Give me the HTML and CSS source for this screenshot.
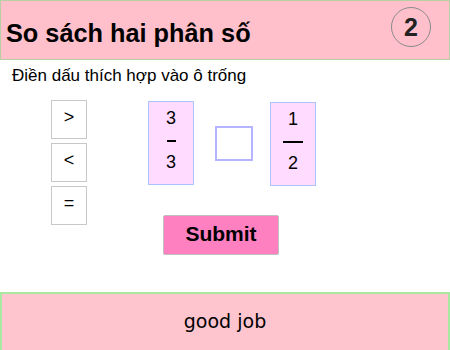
FILE: index.html
```html
<!DOCTYPE html>
<html lang="vi">
<head>
<meta charset="utf-8">
<title>So sách hai phân số</title>
<link rel="stylesheet" href="styles.css">
</head>
<body>
<div class="page">
  <header class="header">
    <h1 class="title">So sách hai phân số</h1>
    <div class="badge">2</div>
  </header>
  <main class="main">
    <p class="instr">Điền dấu thích hợp vào ô trống</p>
    <div class="game">
      <div class="ops">
        <div class="op">&gt;</div>
        <div class="op">&lt;</div>
        <div class="op">=</div>
      </div>
      <div class="board">
        <div class="row">
          <div class="frac frac-a">
            <span class="num">3</span>
            <span class="bar bar-short"></span>
            <span class="num">3</span>
          </div>
          <div class="slot"></div>
          <div class="frac frac-b">
            <span class="num">1</span>
            <span class="bar bar-long"></span>
            <span class="num">2</span>
          </div>
        </div>
        <button class="submit">Submit</button>
      </div>
    </div>
  </main>
  <footer class="footer">good job</footer>
</div>
</body>
</html>
```
FILE: styles.css
```css
* { box-sizing: border-box; }
html, body { margin: 0; padding: 0; background: #fff; }
body { font-family: "Liberation Sans", Arial, sans-serif; color: #000; }
.page { width: 450px; height: 350px; display: flex; flex-direction: column; overflow: hidden; }

.header {
  height: 60px;
  background: #ffc0cb;
  border: 1px solid #b9cfa3;
  display: flex;
  align-items: center;
  justify-content: space-between;
  padding: 0 18px 0 5px;
  flex: none;
}
.title { margin: 0; font-size: 25.3px; font-weight: bold; padding-top: 7px; }
.badge {
  width: 40px; height: 40px;
  border: 1px solid #8a8a8a;
  border-radius: 50%;
  display: flex; align-items: center; justify-content: center;
  font-size: 25px; font-weight: bold; color: #222;
  margin-top: -6px;
}

.main { flex: 1; }
.instr { margin: 6px 0 0 12px; font-size: 17px; line-height: 20px; }
.game { display: flex; padding-left: 51px; margin-top: 14px; }
.ops { display: flex; flex-direction: column; gap: 4px; }
.op {
  width: 36px; height: 39px;
  border: 1px solid #c8c8c8;
  display: flex; align-items: center; justify-content: center;
  font-size: 18px;
  padding-bottom: 5px;
}
.board { margin-left: 61px; display: flex; flex-direction: column; align-items: flex-start; }
.row { display: flex; align-items: center; }
.frac {
  background: #ffdcff;
  border: 1px solid #a9c4ff;
  display: flex; flex-direction: column; align-items: center;
  height: 84px;
  padding-top: 6px;
}
.frac-a { width: 46px; }
.frac-b { width: 46px; margin-left: 17px; margin-top: 2px; }
.num { font-size: 18px; line-height: 20px; }
.bar { display: block; height: 2px; background: #000; margin: 12px 0 10px; }
.bar-short { width: 9px; }
.bar-long { width: 20px; }
.slot {
  width: 38px; height: 35px;
  border: 2px solid #b4b4ff;
  margin-left: 21px;
}
.submit {
  margin: 29px 0 0 15px;
  width: 116px; height: 40px;
  background: #ff80c0;
  border: 1px solid #bfbfbf;
  border-radius: 2px;
  font-family: "Liberation Sans", Arial, sans-serif;
  font-size: 21px; font-weight: bold; color: #000;
  padding: 0 0 3px;
}

.footer {
  flex: none;
  height: 58px;
  background: #ffc5cf;
  border: 2px solid #a8e8a0;
  border-bottom: none;
  display: flex; align-items: center; justify-content: center;
  font-family: "DejaVu Sans", sans-serif;
  font-size: 19px;
  padding-bottom: 2px;
}
```
